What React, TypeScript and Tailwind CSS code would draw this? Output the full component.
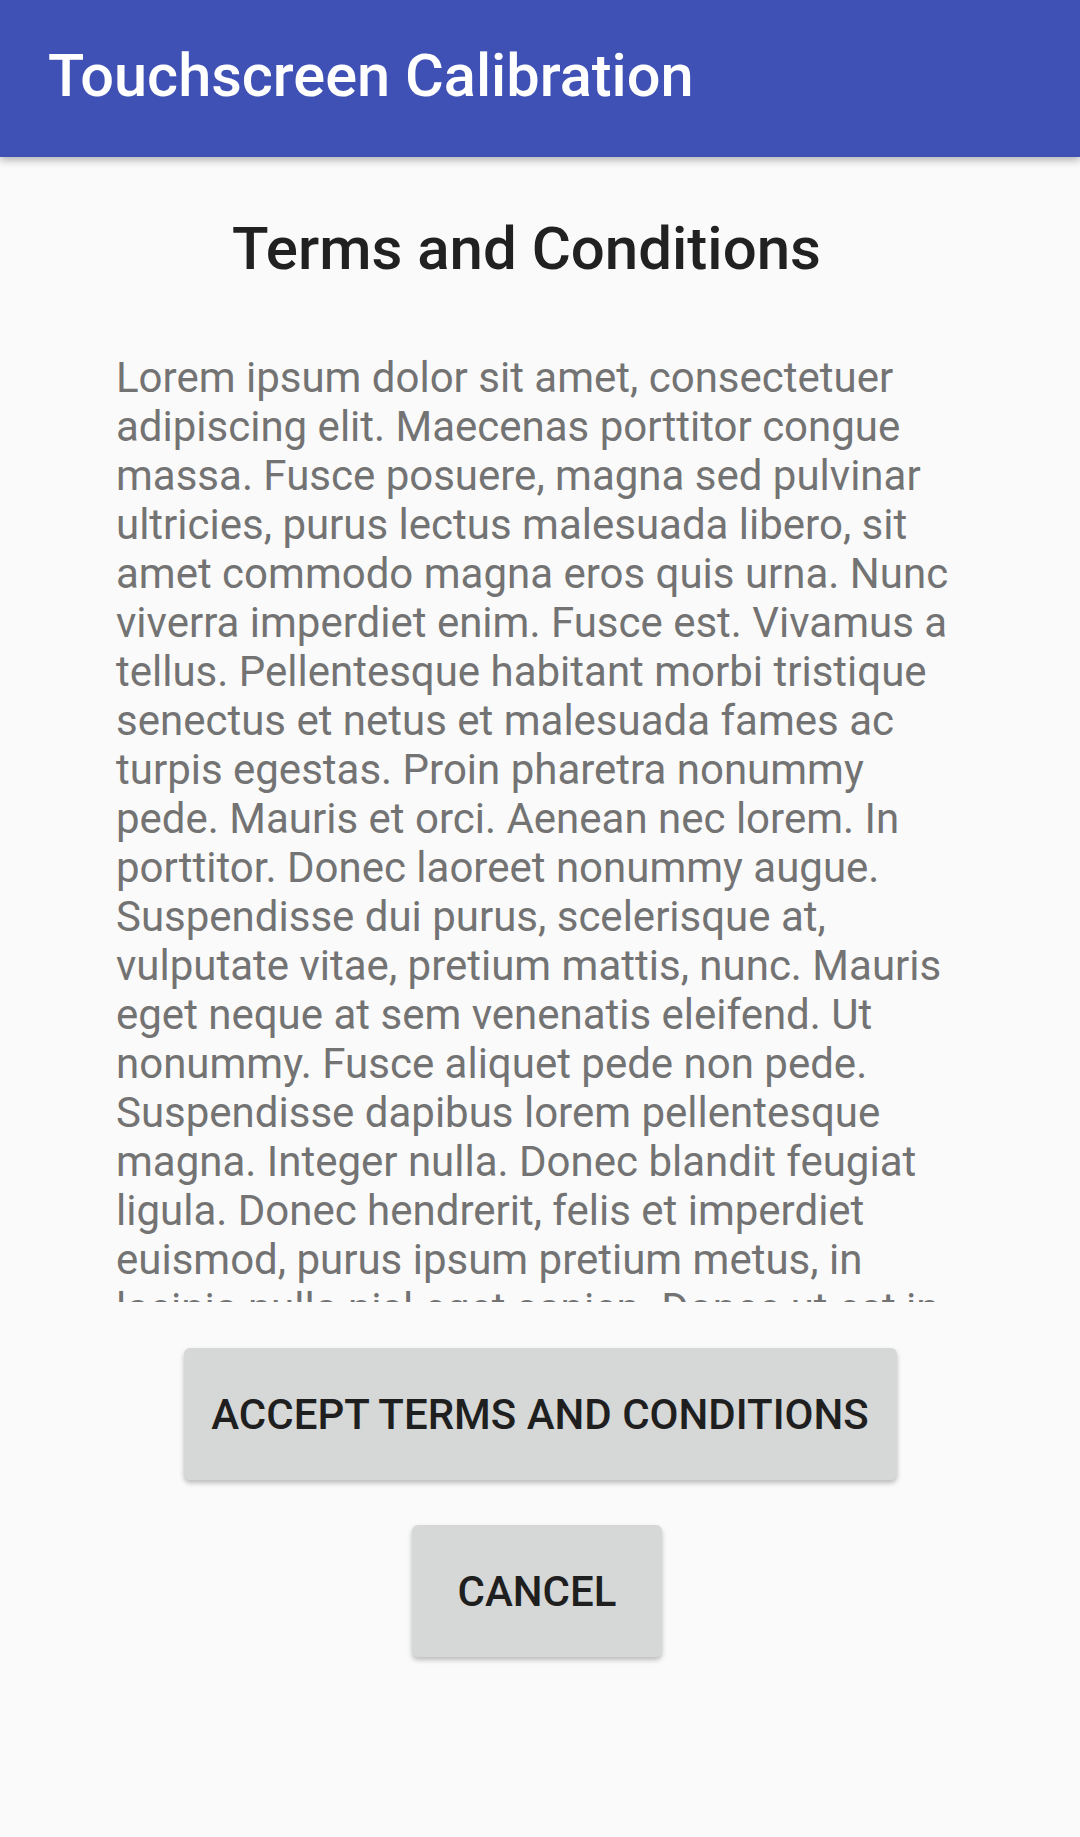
const lines = [
  'Lorem ipsum dolor sit amet, consectetuer',
  'adipiscing elit. Maecenas porttitor congue',
  'massa. Fusce posuere, magna sed pulvinar',
  'ultricies, purus lectus malesuada libero, sit',
  'amet commodo magna eros quis urna. Nunc',
  'viverra imperdiet enim. Fusce est. Vivamus a',
  'tellus. Pellentesque habitant morbi tristique',
  'senectus et netus et malesuada fames ac',
  'turpis egestas. Proin pharetra nonummy',
  'pede. Mauris et orci. Aenean nec lorem. In',
  'porttitor. Donec laoreet nonummy augue.',
  'Suspendisse dui purus, scelerisque at,',
  'vulputate vitae, pretium mattis, nunc. Mauris',
  'eget neque at sem venenatis eleifend. Ut',
  'nonummy. Fusce aliquet pede non pede.',
  'Suspendisse dapibus lorem pellentesque',
  'magna. Integer nulla. Donec blandit feugiat',
  'ligula. Donec hendrerit, felis et imperdiet',
  'euismod, purus ipsum pretium metus, in',
  'lacinia nulla nisl eget sapien. Donec ut est in',
  'lectus consequat consequat.',
];

export default function App() {
  return (
    <div className="flex min-h-[1837px] flex-col bg-[#fafafa] font-['Roboto',sans-serif]">
      <header className="relative z-10 h-[157px] bg-[#3f51b5] pl-[48px] pt-[47px] shadow-[0_3px_8px_rgba(0,0,0,0.3)]">
        <h1 className="text-[59.5px] font-medium leading-none text-white">Touchscreen Calibration</h1>
      </header>

      <main className="flex flex-col items-center">
        <h2 className="mt-[62px] pr-[27px] text-[60px] font-medium leading-none text-[#212121]">
          Terms and Conditions
        </h2>

        <div className="mt-[74px] h-[949px] w-full overflow-hidden pl-[116px] text-[42px] leading-[49px] text-[#737373]">
          {lines.map((line) => (
            <div key={line} className="whitespace-nowrap">
              {line}
            </div>
          ))}
        </div>

        <button className="mt-[46px] flex h-[132px] w-[713px] items-center justify-center rounded-[6px] bg-[#d6d7d7] text-[42px] font-medium text-[#1f1f1f] shadow-[0_3px_5px_rgba(0,0,0,0.25)]">
          ACCEPT TERMS AND CONDITIONS
        </button>
        <button className="mt-[45px] mr-[6px] flex h-[132px] w-[250px] items-center justify-center rounded-[6px] bg-[#d6d7d7] text-[42px] font-medium text-[#1f1f1f] shadow-[0_3px_5px_rgba(0,0,0,0.25)]">
          CANCEL
        </button>
      </main>
    </div>
  );
}
